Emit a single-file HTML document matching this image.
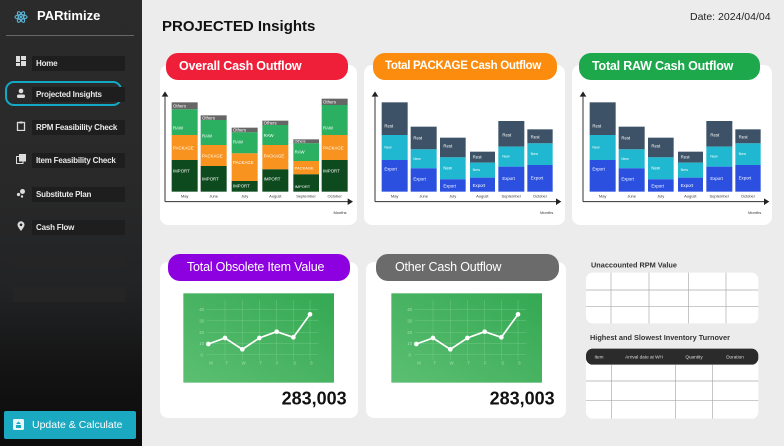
<!DOCTYPE html>
<html><head><meta charset="utf-8"><style>
*{margin:0;padding:0;box-sizing:border-box}
body{width:784px;height:446px;overflow:hidden;background:#ececec;font-family:"Liberation Sans",sans-serif;position:relative}
.side{position:absolute;left:0;top:0;width:142px;height:446px;background:linear-gradient(180deg,#2b2b2b 0%,#292929 40%,#222325 65%,#121212 85%,#0c0c0c 100%)}
.a{position:absolute}
.nav{position:absolute;left:32px;width:93px;height:15px;background:#1e1e1e;color:#e8e8e8;font-size:8px;padding:3px 0 0 4px;font-weight:bold;letter-spacing:-.2px;white-space:nowrap}
.ic{position:absolute;left:16px;width:10px;height:10px}
.card{position:absolute;background:#fff;border-radius:8px}
.pill{position:absolute;border-radius:12px;color:#fff;font-size:12.5px;font-weight:bold;padding-left:13px;line-height:27px;white-space:nowrap;letter-spacing:-.2px}
svg text{font-family:"Liberation Sans",sans-serif}
</style></head><body>
<div class="side">
 <svg class="a" style="left:14px;top:10px" width="14" height="14" viewBox="0 0 14 14"><g fill="none" stroke="#5ab4d6" stroke-width="1.1"><ellipse cx="7" cy="7" rx="6" ry="2.3"/><ellipse cx="7" cy="7" rx="6" ry="2.3" transform="rotate(60 7 7)"/><ellipse cx="7" cy="7" rx="6" ry="2.3" transform="rotate(120 7 7)"/></g><circle cx="7" cy="7" r="1.2" fill="#5ab4d6"/></svg>
 <div class="a" style="left:37px;top:8px;color:#fff;font-size:13px;font-weight:bold">PARtimize</div>
 <div class="a" style="left:6px;top:35px;width:128px;height:1px;background:#666"></div>
 <svg class="ic" style="top:56px" viewBox="0 0 10 10"><g fill="#ddd"><rect x="0" y="0" width="4" height="6"/><rect x="5" y="0" width="5" height="4"/><rect x="0" y="7" width="4" height="3"/><rect x="5" y="5" width="5" height="5"/></g></svg>
 <div class="nav" style="top:56px">Home</div>
 <div class="a" style="left:5px;top:81px;width:117px;height:25px;border:2.5px solid #13a9c4;border-radius:9px"></div>
 <svg class="ic" style="top:88px" viewBox="0 0 10 10"><g fill="#ddd"><circle cx="5" cy="3" r="2.3"/><rect x="1" y="6.5" width="8" height="3.5" rx="1.5"/></g></svg>
 <div class="nav" style="top:87px;background:#1e1e1e">Projected Insights</div>
 <svg class="ic" style="top:121px" viewBox="0 0 10 10"><rect x="1.5" y="1.5" width="7" height="8" fill="none" stroke="#ddd" stroke-width="1.3"/><rect x="3.5" y="0.5" width="3" height="2" fill="#ddd"/></svg>
 <div class="nav" style="top:120px">RPM Feasibility Check</div>
 <svg class="ic" style="top:154px" viewBox="0 0 10 10"><rect x="0.5" y="2.5" width="6.5" height="7" fill="none" stroke="#ddd"/><rect x="3" y="0" width="7" height="7.5" fill="#ddd"/></svg>
 <div class="nav" style="top:153px">Item Feasibility Check</div>
 <svg class="ic" style="top:188px" viewBox="0 0 10 10"><g fill="#ddd"><circle cx="6.5" cy="3.5" r="2.5"/><circle cx="2.5" cy="6.5" r="1.6"/><circle cx="6" cy="8.5" r="1.2"/></g></svg>
 <div class="nav" style="top:187px">Substitute Plan</div>
 <svg class="ic" style="top:221px" viewBox="0 0 10 10"><path d="M5 10 C2 6 1.5 5 1.5 3.8 A3.5 3.5 0 0 1 8.5 3.8 C8.5 5 8 6 5 10Z" fill="#ddd"/><circle cx="5" cy="3.8" r="1.3" fill="#222"/></svg>
 <div class="nav" style="top:220px">Cash Flow</div>
 <div class="a" style="left:13px;top:253px;width:112px;height:15px;background:#252525"></div>
 <div class="a" style="left:13px;top:287px;width:112px;height:15px;background:#252525"></div>
 <div class="a" style="left:4px;top:411px;width:132px;height:28px;background:#1ba8c1;border-radius:2px;color:#fff;font-size:10.5px;line-height:28px;padding-left:28px">Update &amp; Calculate</div>
 <svg class="a" style="left:13px;top:419px" width="11" height="11" viewBox="0 0 11 11"><rect width="11" height="11" rx="1.5" fill="#e8f6f8"/><path d="M3 6h5v3H3z M5.5 2.5 L8 5 H3z" fill="#1ba8c1"/></svg>
</div>

<div class="a" style="left:162px;top:18px;font-size:15px;font-weight:bold;color:#111">PROJECTED Insights</div>
<div class="a" style="left:690px;top:11px;font-size:10.5px;color:#222">Date: 2024/04/04</div>

<div class="card" style="left:160px;top:65px;width:197px;height:160px"></div>
<div class="card" style="left:364px;top:65px;width:201px;height:160px"></div>
<div class="card" style="left:572px;top:65px;width:200px;height:160px"></div>
<div class="pill" style="left:166px;top:53px;width:182px;background:#ef1f3a">Overall Cash Outflow</div>
<div class="pill" style="left:373px;top:53px;width:184px;background:#fb8c0e;padding-left:12px;font-size:11.5px;letter-spacing:-.3px">Total PACKAGE Cash Outflow</div>
<div class="pill" style="left:579px;top:53px;width:181px;background:#1ea84c">Total RAW Cash Outflow</div>

<svg class="a" style="left:155px;top:50px" width="210" height="180" viewBox="0 0 630 540">
 <g stroke="#333" stroke-width="3"><line x1="30" y1="140" x2="30" y2="455"/><line x1="30" y1="455" x2="580" y2="455"/></g>
 <path d="M20 140 L30 124 L40 140Z M578 445 L594 455 L578 465Z" fill="#222"/>
 <g font-size="13" fill="#fff">
 <rect x="50" y="157" width="78" height="21" fill="#666"/><rect x="50" y="178" width="78" height="77" fill="#2bb061"/><rect x="50" y="255" width="78" height="75" fill="#f7931e"/><rect x="50" y="330" width="78" height="95" fill="#0d4a1d"/>
 <text x="54" y="173">Others</text><text x="54" y="238">RAW</text><text x="54" y="298">PACKAGE</text><text x="54" y="367">IMPORT</text>
 <rect x="137" y="196" width="78" height="14" fill="#666"/><rect x="137" y="210" width="78" height="75" fill="#2bb061"/><rect x="137" y="285" width="78" height="63" fill="#f7931e"/><rect x="137" y="348" width="78" height="77" fill="#0d4a1d"/>
 <text x="141" y="208">Others</text><text x="141" y="262">RAW</text><text x="141" y="323">PACKAGE</text><text x="141" y="392">IMPORT</text>
 <rect x="230" y="233" width="78" height="14" fill="#666"/><rect x="230" y="247" width="78" height="63" fill="#2bb061"/><rect x="230" y="310" width="78" height="83" fill="#f7931e"/><rect x="230" y="393" width="78" height="32" fill="#0d4a1d"/>
 <text x="234" y="245">Others</text><text x="234" y="280">RAW</text><text x="234" y="342">PACKAGE</text><text x="234" y="412">IMPORT</text>
 <rect x="322" y="212" width="78" height="13" fill="#666"/><rect x="322" y="225" width="78" height="60" fill="#2bb061"/><rect x="322" y="285" width="78" height="73" fill="#f7931e"/><rect x="322" y="358" width="78" height="67" fill="#0d4a1d"/>
 <text x="326" y="223">Others</text><text x="326" y="261">RAW</text><text x="326" y="322">PACKAGE</text><text x="326" y="392">IMPORT</text>
 <rect x="415" y="268" width="77" height="12" fill="#666"/><rect x="415" y="280" width="77" height="53" fill="#2bb061"/><rect x="415" y="333" width="77" height="40" fill="#f7931e"/><rect x="415" y="373" width="77" height="52" fill="#0d4a1d"/>
 <text x="419" y="278" font-size="11">Others</text><text x="419" y="310">RAW</text><text x="419" y="358" font-size="12">PACKAGE</text><text x="419" y="414" font-size="12">IMPORT</text>
 <rect x="500" y="146" width="78" height="19" fill="#666"/><rect x="500" y="165" width="78" height="90" fill="#2bb061"/><rect x="500" y="255" width="78" height="75" fill="#f7931e"/><rect x="500" y="330" width="78" height="95" fill="#0d4a1d"/>
 <text x="504" y="160">Others</text><text x="504" y="238">RAW</text><text x="504" y="298">PACKAGE</text><text x="504" y="367">IMPORT</text>
 </g>
 <g font-size="12" fill="#333" text-anchor="middle"><text x="89" y="442">May</text><text x="176" y="442">June</text><text x="269" y="442">July</text><text x="361" y="442">August</text><text x="453" y="442">September</text><text x="539" y="442">October</text><text x="555" y="492">Months</text></g>
</svg>

<svg class="a" style="left:365px;top:50px" width="210" height="180" viewBox="0 0 630 540">
 <g stroke="#333" stroke-width="3"><line x1="30" y1="140" x2="30" y2="455"/><line x1="30" y1="455" x2="575" y2="455"/></g>
 <path d="M20 140 L30 124 L40 140Z M573 445 L589 455 L573 465Z" fill="#222"/>
 <g font-size="13" fill="#fff">
 <rect x="50" y="157" width="78" height="98" fill="#3d5266"/><rect x="50" y="255" width="78" height="75" fill="#1fb8d0"/><rect x="50" y="330" width="78" height="95" fill="#2b50e0"/><text x="58" y="233">Rest</text><text x="58" y="295" font-size="11">New</text><text x="58" y="362">Export</text>
 <rect x="137" y="230" width="78" height="68" fill="#3d5266"/><rect x="137" y="298" width="78" height="57" fill="#1fb8d0"/><rect x="137" y="355" width="78" height="70" fill="#2b50e0"/><text x="145" y="268">Rest</text><text x="145" y="330" font-size="11">New</text><text x="145" y="392">Export</text>
 <rect x="225" y="263" width="77" height="59" fill="#3d5266"/><rect x="225" y="322" width="77" height="66" fill="#1fb8d0"/><rect x="225" y="388" width="77" height="37" fill="#2b50e0"/><text x="235" y="292">Rest</text><text x="235" y="358">New</text><text x="235" y="413">Export</text>
 <rect x="315" y="305" width="75" height="33" fill="#3d5266"/><rect x="315" y="338" width="75" height="45" fill="#1fb8d0"/><rect x="315" y="383" width="75" height="42" fill="#2b50e0"/><text x="323" y="325">Rest</text><text x="323" y="363" font-size="11">New</text><text x="323" y="411">Export</text>
 <rect x="400" y="213" width="78" height="77" fill="#3d5266"/><rect x="400" y="290" width="78" height="60" fill="#1fb8d0"/><rect x="400" y="350" width="78" height="75" fill="#2b50e0"/><text x="412" y="260">Rest</text><text x="412" y="323" font-size="11">New</text><text x="412" y="390">Export</text>
 <rect x="487" y="238" width="76" height="42" fill="#3d5266"/><rect x="487" y="280" width="76" height="65" fill="#1fb8d0"/><rect x="487" y="345" width="76" height="80" fill="#2b50e0"/><text x="497" y="265">Rest</text><text x="497" y="315" font-size="11">New</text><text x="497" y="388">Export</text>
 </g>
 <g font-size="12" fill="#333" text-anchor="middle"><text x="89" y="442">May</text><text x="176" y="442">June</text><text x="263" y="442">July</text><text x="352" y="442">August</text><text x="439" y="442">September</text><text x="525" y="442">October</text><text x="545" y="492">Months</text></g>
</svg>

<svg class="a" style="left:573px;top:50px" width="210" height="180" viewBox="0 0 630 540">
 <g stroke="#333" stroke-width="3"><line x1="30" y1="140" x2="30" y2="455"/><line x1="30" y1="455" x2="575" y2="455"/></g>
 <path d="M20 140 L30 124 L40 140Z M573 445 L589 455 L573 465Z" fill="#222"/>
 <g font-size="13" fill="#fff">
 <rect x="50" y="157" width="78" height="98" fill="#3d5266"/><rect x="50" y="255" width="78" height="75" fill="#1fb8d0"/><rect x="50" y="330" width="78" height="95" fill="#2b50e0"/><text x="58" y="233">Rest</text><text x="58" y="295" font-size="11">New</text><text x="58" y="362">Export</text>
 <rect x="137" y="230" width="78" height="68" fill="#3d5266"/><rect x="137" y="298" width="78" height="57" fill="#1fb8d0"/><rect x="137" y="355" width="78" height="70" fill="#2b50e0"/><text x="145" y="268">Rest</text><text x="145" y="330" font-size="11">New</text><text x="145" y="392">Export</text>
 <rect x="225" y="263" width="77" height="59" fill="#3d5266"/><rect x="225" y="322" width="77" height="66" fill="#1fb8d0"/><rect x="225" y="388" width="77" height="37" fill="#2b50e0"/><text x="235" y="292">Rest</text><text x="235" y="358">New</text><text x="235" y="413">Export</text>
 <rect x="315" y="305" width="75" height="33" fill="#3d5266"/><rect x="315" y="338" width="75" height="45" fill="#1fb8d0"/><rect x="315" y="383" width="75" height="42" fill="#2b50e0"/><text x="323" y="325">Rest</text><text x="323" y="363" font-size="11">New</text><text x="323" y="411">Export</text>
 <rect x="400" y="213" width="78" height="77" fill="#3d5266"/><rect x="400" y="290" width="78" height="60" fill="#1fb8d0"/><rect x="400" y="350" width="78" height="75" fill="#2b50e0"/><text x="412" y="260">Rest</text><text x="412" y="323" font-size="11">New</text><text x="412" y="390">Export</text>
 <rect x="487" y="238" width="76" height="42" fill="#3d5266"/><rect x="487" y="280" width="76" height="65" fill="#1fb8d0"/><rect x="487" y="345" width="76" height="80" fill="#2b50e0"/><text x="497" y="265">Rest</text><text x="497" y="315" font-size="11">New</text><text x="497" y="388">Export</text>
 </g>
 <g font-size="12" fill="#333" text-anchor="middle"><text x="89" y="442">May</text><text x="176" y="442">June</text><text x="263" y="442">July</text><text x="352" y="442">August</text><text x="439" y="442">September</text><text x="525" y="442">October</text><text x="545" y="492">Months</text></g>
</svg>

<div class="card" style="left:160px;top:262px;width:198px;height:156px"></div>
<div class="card" style="left:366px;top:262px;width:200px;height:156px"></div>
<div class="pill" style="left:168px;top:254px;width:182px;background:#8d00e0;padding-left:19px;font-weight:normal;font-size:12.5px">Total Obsolete Item Value</div>
<div class="pill" style="left:376px;top:254px;width:183px;background:#6b6b6b;padding-left:19px;font-weight:normal;font-size:12.5px">Other Cash Outflow</div>

<svg class="a" style="left:155px;top:250px" width="210" height="180" viewBox="0 0 630 540">
 <defs><linearGradient id="g" x1="0" y1="1" x2="1" y2="0"><stop offset="0" stop-color="#5cbf72"/><stop offset="1" stop-color="#33a852"/></linearGradient></defs>
 <rect x="85" y="130" width="452" height="268" fill="url(#g)"/>
 <g stroke="#7fd092" stroke-width="1.5" opacity=".7"><line x1="155" y1="178" x2="490" y2="178"/><line x1="155" y1="212" x2="490" y2="212"/><line x1="155" y1="247" x2="490" y2="247"/><line x1="155" y1="280" x2="490" y2="280"/><line x1="155" y1="314" x2="490" y2="314"/><line x1="210" y1="150" x2="210" y2="330"/><line x1="262" y1="150" x2="262" y2="330"/><line x1="313" y1="150" x2="313" y2="330"/><line x1="365" y1="150" x2="365" y2="330"/><line x1="415" y1="150" x2="415" y2="330"/><line x1="465" y1="150" x2="465" y2="330"/></g>
 <g font-size="13" fill="#a6dcb2" text-anchor="middle"><text x="140" y="183">40</text><text x="140" y="217">30</text><text x="140" y="252">20</text><text x="140" y="285">10</text><text x="140" y="319">0</text><text x="168" y="343">M</text><text x="215" y="343">T</text><text x="266" y="343">W</text><text x="317" y="343">T</text><text x="367" y="343">F</text><text x="419" y="343">S</text><text x="469" y="343">S</text></g>
 <polyline points="160,282 210,264 262,298 313,264 365,245 415,262 465,193" fill="none" stroke="#fff" stroke-width="5"/>
 <g fill="#fff"><circle cx="160" cy="282" r="7"/><circle cx="210" cy="264" r="7"/><circle cx="262" cy="298" r="7"/><circle cx="313" cy="264" r="7"/><circle cx="365" cy="245" r="7"/><circle cx="415" cy="262" r="7"/><circle cx="465" cy="193" r="7"/></g>
 <text x="575" y="463" text-anchor="end" font-size="54" font-weight="bold" fill="#111">283,003</text>
</svg>
<svg class="a" style="left:363px;top:250px" width="210" height="180" viewBox="0 0 630 540">
 <rect x="85" y="130" width="452" height="268" fill="url(#g)"/>
 <g stroke="#7fd092" stroke-width="1.5" opacity=".7"><line x1="155" y1="178" x2="490" y2="178"/><line x1="155" y1="212" x2="490" y2="212"/><line x1="155" y1="247" x2="490" y2="247"/><line x1="155" y1="280" x2="490" y2="280"/><line x1="155" y1="314" x2="490" y2="314"/><line x1="210" y1="150" x2="210" y2="330"/><line x1="262" y1="150" x2="262" y2="330"/><line x1="313" y1="150" x2="313" y2="330"/><line x1="365" y1="150" x2="365" y2="330"/><line x1="415" y1="150" x2="415" y2="330"/><line x1="465" y1="150" x2="465" y2="330"/></g>
 <g font-size="13" fill="#a6dcb2" text-anchor="middle"><text x="140" y="183">40</text><text x="140" y="217">30</text><text x="140" y="252">20</text><text x="140" y="285">10</text><text x="140" y="319">0</text><text x="168" y="343">M</text><text x="215" y="343">T</text><text x="266" y="343">W</text><text x="317" y="343">T</text><text x="367" y="343">F</text><text x="419" y="343">S</text><text x="469" y="343">S</text></g>
 <polyline points="160,282 210,264 262,298 313,264 365,245 415,262 465,193" fill="none" stroke="#fff" stroke-width="5"/>
 <g fill="#fff"><circle cx="160" cy="282" r="7"/><circle cx="210" cy="264" r="7"/><circle cx="262" cy="298" r="7"/><circle cx="313" cy="264" r="7"/><circle cx="365" cy="245" r="7"/><circle cx="415" cy="262" r="7"/><circle cx="465" cy="193" r="7"/></g>
 <text x="575" y="463" text-anchor="end" font-size="54" font-weight="bold" fill="#111">283,003</text>
</svg>

<svg class="a" style="left:575px;top:250px" width="209" height="180" viewBox="0 0 627 540">
 <text x="48" y="53" font-size="22" font-weight="bold" fill="#333">Unaccounted RPM Value</text>
 <rect x="33" y="68" width="517" height="152" rx="20" fill="#fff"/>
 <g stroke="#aaa" stroke-width="2"><line x1="33" y1="120" x2="550" y2="120"/><line x1="33" y1="170" x2="550" y2="170"/><line x1="108" y1="68" x2="108" y2="220"/><line x1="222" y1="68" x2="222" y2="220"/><line x1="340" y1="68" x2="340" y2="220"/><line x1="453" y1="68" x2="453" y2="220"/></g>
 <text x="45" y="270" font-size="22" font-weight="bold" fill="#333">Highest and Slowest Inventory Turnover</text>
 <rect x="33" y="296" width="517" height="210" rx="20" fill="#fff"/>
 <rect x="33" y="296" width="517" height="48" rx="20" fill="#2b2b2b"/>
 <g font-size="14" fill="#ddd" text-anchor="middle"><text x="72" y="325">Item</text><text x="207" y="325">Arrival date at WH</text><text x="357" y="325">Quantity</text><text x="480" y="325">Duration</text></g>
 <g stroke="#aaa" stroke-width="2"><line x1="33" y1="393" x2="550" y2="393"/><line x1="33" y1="452" x2="550" y2="452"/><line x1="110" y1="344" x2="110" y2="506"/><line x1="302" y1="344" x2="302" y2="506"/><line x1="413" y1="344" x2="413" y2="506"/></g>
</svg>
</body></html>
